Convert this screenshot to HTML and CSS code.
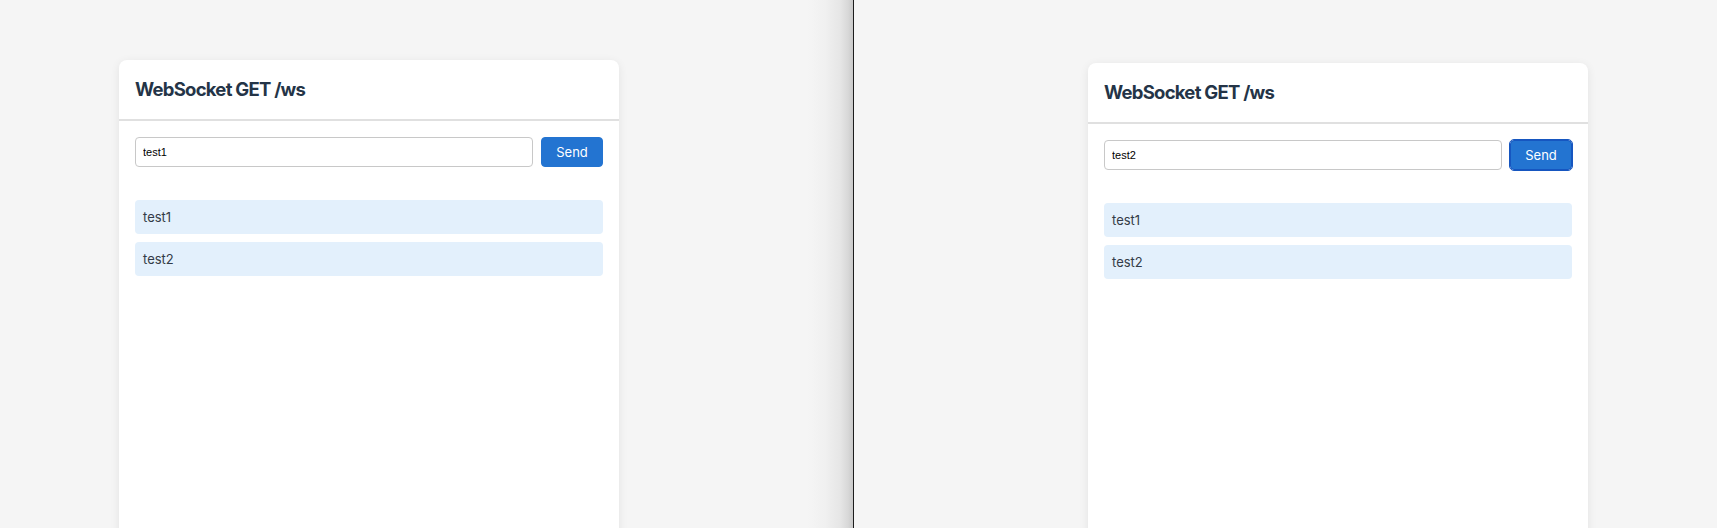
FILE: index.html
```html
<!DOCTYPE html>
<html lang="en">
<head>
<meta charset="utf-8">
<title>WebSocket GET /ws</title>
<link rel="stylesheet" href="styles.css">
</head>
<body>
<div class="split">
  <section class="pane pane-left">
    <div class="card">
      <header class="card-header"><h3 class="card-title">WebSocket GET /ws</h3></header>
      <div class="card-body">
        <form class="send-row">
          <input class="msg-input" type="text" value="test1">
          <button class="send-btn" type="button">Send</button>
        </form>
        <ul class="messages">
          <li class="message">test1</li>
          <li class="message">test2</li>
        </ul>
      </div>
    </div>
  </section>
  <div class="divider"></div>
  <section class="pane pane-right">
    <div class="card">
      <header class="card-header"><h3 class="card-title">WebSocket GET /ws</h3></header>
      <div class="card-body">
        <form class="send-row">
          <input class="msg-input" type="text" value="test2">
          <button class="send-btn is-focused" type="button">Send</button>
        </form>
        <ul class="messages">
          <li class="message">test1</li>
          <li class="message">test2</li>
        </ul>
      </div>
    </div>
  </section>
</div>
</body>
</html>
```

FILE: styles.css
```css
* { box-sizing: border-box; }

html, body {
  margin: 0;
  padding: 0;
  height: 528px;
  overflow: hidden;
  background: #f5f5f5;
  font-family: Inter, "Noto Sans", sans-serif;
}

.split {
  display: flex;
  height: 528px;
}

.pane {
  height: 528px;
  overflow: hidden;
  background: #f5f5f5;
}

.pane-left {
  width: 853px;
  flex: none;
  padding: 60px 0 0 119px;
  background: linear-gradient(to right,
    #f5f5f5 0, #f5f5f5 807px, #f0f0f0 825px, #e6e6e6 840px, #d8d8d8 848px, #c9c9c9 853px);
}

.divider {
  width: 1px;
  flex: none;
  background: #1c1c1c;
}

.pane-right {
  flex: 1;
  padding: 63px 0 0 234px;
}

.card {
  width: 500px;
  height: 620px;
  background: #fff;
  border-radius: 8px;
  box-shadow: 0 2px 10px rgba(0, 0, 0, 0.08);
}

.card-header {
  padding: 16px;
  border-bottom: 2px solid #e0e0e0;
}

.card-title {
  margin: 0;
  font-size: 18.5px;
  line-height: 27px;
  font-weight: 700;
  letter-spacing: -0.75px;
  color: #243447;
}

.card-body {
  padding: 16px;
}

.send-row {
  display: flex;
  gap: 8px;
  margin: 0 0 33px;
}

.msg-input {
  flex: 1;
  height: 30px;
  border: 1px solid #c8c8c8;
  border-radius: 4px;
  padding: 0 7px;
  font-family: "Liberation Sans", Arial, sans-serif;
  font-size: 11px;
  color: #000;
  background: #fff;
  outline: none;
}

.send-btn {
  width: 62px;
  height: 30px;
  border: 1px solid #2374d1;
  border-radius: 4px;
  background: #2374d1;
  color: #fff;
  font-family: Inter, "Noto Sans", sans-serif;
  font-size: 13px;
  padding: 0;
}

.send-btn.is-focused {
  border-color: #1656c0;
  outline: 1px solid #1656c0;
}

.messages {
  list-style: none;
  margin: 0;
  padding: 0;
  display: flex;
  flex-direction: column;
  gap: 8px;
}

.message {
  padding: 8px;
  line-height: 18px;
  font-size: 13px;
  color: #333b47;
  background: #e3f0fc;
  border-radius: 4px;
}
```
